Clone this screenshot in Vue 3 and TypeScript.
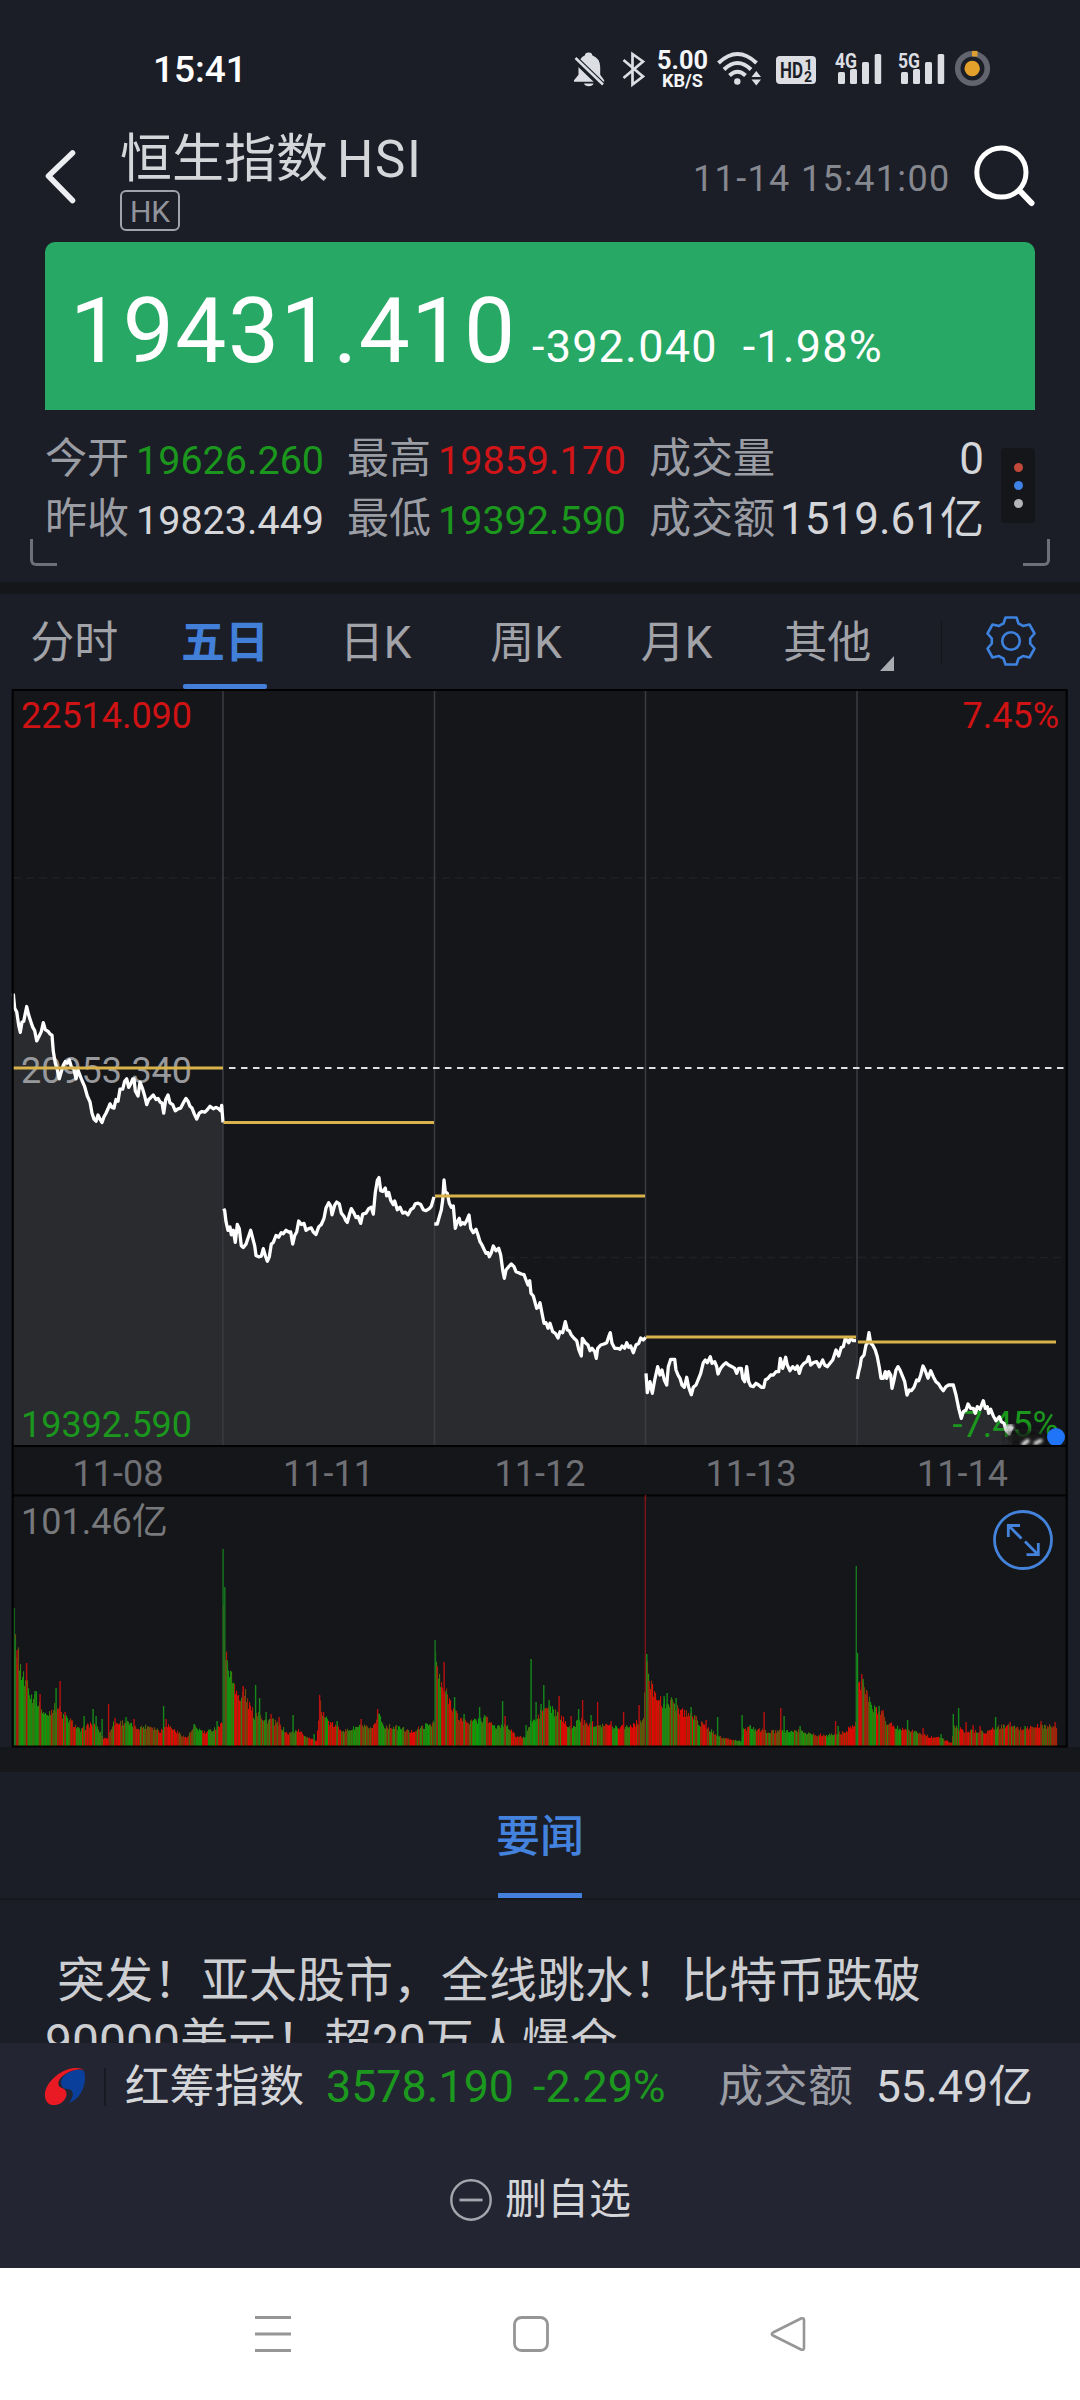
<script setup lang="ts">
interface Session {
  label: string
  x0: number
  y0: number
  sx: number
  sy: number
  left: number
  right: number
  close: number
  raw: string
}

interface Bar {
  x: number
  h: number
  w: number
  color: string
}

const CHART_BOTTOM = 1445
const VOLUME_BOTTOM = 1746

const tabs = ['分时', '五日', '日K', '周K', '月K', '其他']
const activeTab = '五日'

const sessions: Session[] = [
  {
    label: '11-08', x0: 0, y0: 960, sx: 1 / 3, sy: 1 / 2.904, left: 13, right: 223, close: 1068,
    raw: '40,98 44,140 50,150 56,190 61,210 66,180 71,178 80,135 86,160 92,178 98,195 104,205 110,235 118,220 124,208 130,182 136,202 144,207 150,215 156,218 160,265 166,300 172,318 178,345 184,325 190,305 196,295 202,300 208,290 214,310 222,318 228,345 234,320 240,335 246,350 254,368 262,395 270,412 276,445 282,462 288,468 294,450 300,462 306,472 312,455 318,445 324,432 330,418 336,428 342,430 348,405 354,410 360,375 368,375 374,352 380,345 386,370 392,360 398,345 402,345 406,380 414,395 420,355 428,375 434,395 440,420 446,405 452,400 460,392 468,405 474,402 480,412 486,415 491,445 497,405 504,392 510,415 518,420 526,438 534,432 542,430 550,415 558,402 564,410 570,425 576,430 582,445 590,462 598,445 606,440 614,442 622,435 630,425 640,432 648,428 656,432 662,438 665,422 669,472',
  },
  {
    label: '11-11', x0: 0, y0: 960, sx: 1 / 3, sy: 1 / 2.904, left: 223.5, right: 434, close: 1122.5,
    raw: '671,722 674,728 678,760 684,785 690,775 694,798 700,785 706,820 712,768 718,780 724,830 730,835 738,825 744,808 752,785 758,808 764,830 768,858 776,862 784,860 790,838 796,858 802,875 808,862 814,825 820,820 828,800 836,805 844,792 850,795 858,785 866,790 872,790 878,825 884,800 890,790 896,758 904,768 912,765 918,785 926,780 934,778 940,790 948,797 956,775 964,768 972,750 978,720 986,705 992,715 996,740 1004,712 1010,703 1018,708 1024,735 1032,745 1038,758 1042,762 1048,740 1054,722 1062,735 1068,748 1074,745 1082,765 1088,738 1098,735 1106,722 1114,718 1120,738 1126,675 1132,640 1137,632 1142,670 1148,672 1156,662 1160,685 1166,675 1172,698 1180,710 1184,700 1192,725 1200,718 1208,735 1216,732 1224,740 1232,725 1240,720 1246,708 1254,706 1262,710 1270,725 1278,728 1288,722 1294,715 1302,688',
  },
  {
    label: '11-12', x0: 420, y0: 1100, sx: 1 / 3, sy: 1 / 3, left: 435, right: 645, close: 1196,
    raw: '43,372 52,372 58,350 64,330 68,300 72,240 76,275 82,280 88,310 94,322 100,318 106,385 112,365 118,355 122,375 128,368 134,372 140,362 147,345 152,385 160,398 168,388 174,405 180,425 186,435 192,448 198,460 204,458 208,470 214,458 220,438 228,452 236,445 242,465 248,510 253,535 258,510 266,500 274,492 282,500 288,515 296,518 304,522 312,524 318,540 324,555 329,542 333,580 340,588 346,610 350,625 356,620 360,608 366,640 372,670 378,668 384,685 390,670 398,695 406,700 414,714 420,695 428,698 436,665 442,690 448,692 454,705 462,715 470,722 476,748 484,768 487,715 496,728 504,735 510,752 516,745 524,755 529,775 533,745 542,735 552,732 560,728 566,710 571,698 576,730 584,745 592,745 600,748 606,738 614,745 620,728 626,742 632,738 640,758 648,735 656,730 662,714 670,720 677,712',
  },
  {
    label: '11-13', x0: 420, y0: 1100, sx: 1 / 3, sy: 1 / 3, left: 646, right: 856, close: 1337,
    raw: '678,820 682,878 690,845 697,880 704,840 713,800 720,825 726,810 733,840 740,855 745,800 752,778 764,778 768,810 774,825 780,835 786,855 793,862 800,832 806,862 814,884 820,862 828,855 836,835 842,820 850,788 856,780 862,788 871,770 876,790 884,785 890,800 894,822 902,805 910,795 918,788 926,795 936,800 944,805 950,820 956,805 964,805 968,835 974,845 980,800 986,845 992,858 1000,860 1008,850 1016,855 1024,862 1031,862 1036,840 1044,835 1052,825 1060,825 1068,815 1076,815 1081,775 1088,805 1097,772 1102,795 1110,812 1118,800 1126,808 1132,798 1138,820 1144,800 1152,790 1160,785 1166,770 1172,795 1180,788 1190,785 1198,800 1208,780 1214,795 1222,800 1230,790 1238,780 1248,750 1256,768 1264,742 1270,740 1276,715 1286,728 1292,715 1300,722 1308,722',
  },
  {
    label: '11-14', x0: 800, y0: 1280, sx: 1 / 3, sy: 1 / 3, left: 858, right: 1056, close: 1342,
    raw: '172,297 176,275 180,260 184,235 192,225 198,195 202,190 207,158 212,190 218,195 226,210 232,230 238,262 243,295 250,295 256,275 260,295 266,275 272,285 276,325 282,300 288,270 294,260 300,270 308,290 314,305 321,345 328,330 334,332 342,322 350,300 356,302 362,285 369,258 375,270 384,295 392,272 400,290 408,305 416,312 424,325 430,332 438,320 446,315 460,315 468,345 476,385 484,415 490,395 498,390 504,372 512,385 520,385 526,400 532,380 540,388 550,362 556,385 562,380 566,400 572,388 580,408 588,422 598,410 604,425 612,430 618,450 628,462 636,440',
  },
]

const curves = sessions.map((s) => {
  const pts = s.raw.split(' ').map((p) => {
    const [x, y] = p.split(',').map(Number)
    return [s.x0 + x * s.sx, s.y0 + y * s.sy]
  })
  const line = pts.map((p) => `${p[0].toFixed(1)},${p[1].toFixed(1)}`).join(' ')
  const first = pts[0][0].toFixed(1)
  const last = pts[pts.length - 1][0].toFixed(1)
  return { line, area: `${first},${CHART_BOTTOM} ${line} ${last},${CHART_BOTTOM}` }
})

const dateCenters = [118, 328.5, 540, 751, 962.5]

/* Volume envelope: x:height pairs per session. */
const envelope = (
  '14:107 17:93 20:77 24:65 28:66 30:50 36:48 40:37 46:30 52:38 58:38 62:30 70:25 80:15 90:22 97:18 103:8 107:8 112:22 125:24 135:18 150:20 160:15 166:22 175:15 186:8 194:19 205:13 215:18 222:22 ' +
  '223:158 225:86 228:84 230:70 235:60 240:42 243:58 247:44 254:30 259:36 263:25 270:26 280:20 287:12 297:16 305:10 316:5 320:40 324:30 330:22 345:15 361:20 372:16 378:34 383:20 400:18 410:14 420:18 434:24 ' +
  '435:90 437:76 440:60 447:50 453:38 458:28 470:24 480:26 486:27 496:18 506:22 515:10 524:8 531:25 536:25 541:35 548:38 556:32 565:24 572:16 578:28 585:22 600:22 612:19 630:20 643:26 ' +
  '646:90 649:60 655:55 662:40 667:46 672:42 682:34 690:32 698:24 706:18 722:8 732:6 741:5 743:16 750:18 768:14 788:15 800:15 815:11 830:11 845:14 855:24 ' +
  '856:93 859:60 862:66 866:52 872:36 880:36 886:24 897:18 907:17 915:14 930:9 940:8 951:3 953:20 963:15 975:15 985:14 996:18 1006:20 1020:17 1040:20 1056:19'
)
  .split(' ')
  .map((p) => p.split(':').map(Number))

const spikes =
  '14:138:g 15:107:g 17:96:r 26.5:83:r 35:55:g 40:52:r 56:58:g 60:65:r 65:34:r 84:30:g 93:37:g 96:30:g 102:27:g 108.5:42:r 115:28:r 126:29:g 134:27:r 163.5:40:g 166:27:r 194:22:g 217:25:g 223:197:g 224.7:159:g 227:86:g 243:60:r 255.5:61:g 259.5:48:g 266:34:g 271:32:r 279:29:r 293:31:g 314:12:g 319.5:51:r 323.5:34:r 337:25:g 361:27:r 377.5:37:r 435:106:g 437:80:r 444:84:r 446:55:g 454.5:49:g 464:32:g 479.5:39:g 484.5:31:g 502.5:45:g 505:30:r 526:21:g 531:87:g 536:44:g 541:42:g 543.7:61:g 549:46:g 559:50:r 571:30:r 578.5:37:g 582.5:46:r 591:31:g 597.5:44:r 611:25:r 623.5:34:r 639:41:r 645.2:250:r 646.7:92:g 649:65:r 664:50:g 667:53:g 676:48:g 691:39:g 696:30:r 706:26:r 717.5:29:g 742:31:g 750:21:g 764:34:r 780.7:38:r 784:30:g 800:20:g 835.5:25:r 838:20:g 856.2:180:g 857.4:93:g 861.7:72:r 863:67:g 867:55:r 879:40:g 883:36:r 907.5:26:g 923:18:r 941:12:g 953.2:32:g 958.5:38:g 966:24:r 973:21:r 980:20:r 995.5:29:g 1004:21:g 1010:24:r 1025:20:g 1041:25:r 1055:24:r'
    .split(' ')
    .map((p) => p.split(':'))

const noise = (n: number): number => {
  const v = Math.sin(n * 127.1 + 311.7) * 43758.5453
  return v - Math.floor(v)
}

const envelopeAt = (x: number): number => {
  for (let i = 1; i < envelope.length; i++) {
    const [xa, ha] = envelope[i - 1]
    const [xb, hb] = envelope[i]
    if (x <= xb) return ha + ((hb - ha) * (x - xa)) / (xb - xa)
  }
  return envelope[envelope.length - 1][1]
}

const bars: Bar[] = []
const palette = {
  up: ['#e00a06', '#d40c05', '#b81a08', '#8c300a'],
  mixed: ['#66500b', '#3f660c', '#8c300b', '#2f8210', '#a8200a'],
  down: ['#0a9e0b', '#10920f', '#2a8210', '#3f740d'],
}
for (let x = 14; x <= 1056; x += 1) {
  const cluster = noise(Math.floor(x / 6.3) + 3)
  const set = cluster < 0.36 ? palette.up : cluster > 0.74 ? palette.down : palette.mixed
  const h = envelopeAt(x) * (0.86 + noise(x) * 0.28)
  bars.push({ x, h, w: 1.1, color: set[Math.floor(noise(x * 1.7 + 9) * set.length)] })
}
for (const [x, h, c] of spikes) {
  const tall = Number(h) > 100
  const color = c === 'g' ? (tall ? '#157820' : '#14881a') : tall ? '#7c1418' : '#b81010'
  bars.push({ x: Number(x) - 0.6, h: Number(h), w: 1.4, color })
}
</script>

<template>
  <div class="screen">
    <header class="head">
      <div class="status">
        <span class="clock">15:41</span>
        <svg class="status-icons" width="420" height="40" viewBox="572 48 420 40">
          <g fill="#dcdee3">
            <path d="M585 55.2q0-2.8 3.6-2.8t3.6 2.8q8 3 8 12v7.500l4 5.500v1.500H574v-1.500l4.500-5.500V67q0-9 6.500-11.800zM584 83.500h9.500q-.8 2.800-4.700 2.800t-4.800-2.800z" />
            <path d="M573.500 57.500 603.500 86.500" stroke="#1b1e27" stroke-width="7" />
            <path d="M575.500 58 603 84.500" stroke="#dcdee3" stroke-width="2.600" />
          </g>
          <path d="M623.500 60 643 76.500 632.500 84.500V54L643 61.500 623.500 78" fill="none" stroke="#dcdee3" stroke-width="2.700" />
          <text x="682.500" y="69.300" text-anchor="middle" class="st-speed" textLength="51" lengthAdjust="spacingAndGlyphs">5.00</text>
          <text x="682.500" y="86.500" text-anchor="middle" class="st-unit" textLength="41" lengthAdjust="spacingAndGlyphs">KB/S</text>
          <g fill="none" stroke="#dcdee3" stroke-width="4">
            <path d="M718.500 63q19-18 38 0" />
            <path d="M724 69.500q13.500-13 27 0" />
            <path d="M729.500 75.500q8-7.500 16 0" />
          </g>
          <circle cx="737.300" cy="81.500" r="3.200" fill="#dcdee3" />
          <path d="M751.500 77 756.300 71 761 77zM751.500 79.500 756.300 85.500 761 79.500z" fill="#dcdee3" />
          <rect x="776" y="56" width="40" height="28" rx="4" fill="#dcdee3" />
          <text x="780" y="78" class="st-hd" textLength="23" lengthAdjust="spacingAndGlyphs">HD</text>
          <text x="804.500" y="69.500" class="st-sub">1</text>
          <text x="804" y="81.500" class="st-sub">2</text>
          <g v-for="(net, i) in ['4G', '5G']" :key="net" :transform="`translate(${i * 63} 0)`">
            <g fill="#dcdee3">
              <rect x="838" y="72" width="7" height="12" rx="1.500" />
              <rect x="850" y="69" width="7" height="15" rx="1.500" />
              <rect x="862" y="62" width="7" height="22" rx="1.500" />
              <rect x="874.700" y="54" width="6.500" height="30" rx="1.500" />
            </g>
            <text x="835" y="67.500" class="st-net" textLength="22" lengthAdjust="spacingAndGlyphs">{{ net }}</text>
          </g>
          <circle cx="972.500" cy="68.500" r="14.800" fill="none" stroke="#62656f" stroke-width="5.600" />
          <path d="M972 53.700h5.500" stroke="#dba02f" stroke-width="5.600" />
          <circle cx="972.200" cy="68.500" r="7.700" fill="#e3a02a" />
        </svg>
      </div>

      <div class="title-row">
        <svg class="back" width="36" height="60" viewBox="44 146 36 60">
          <path d="M72.500 153 48.500 176 72.500 200.500" fill="none" stroke="#eceef2" stroke-width="5.600" stroke-linecap="round" stroke-linejoin="round" />
        </svg>
        <div class="names">
          <h1 class="name">恒生指数<span class="code">HSI</span></h1>
          <span class="market">HK</span>
        </div>
        <time class="stamp">11-14 15:41:00</time>
        <svg class="search" width="64" height="64" viewBox="972 144 64 64">
          <circle cx="1001.400" cy="172.500" r="24.600" fill="none" stroke="#fff" stroke-width="5" />
          <path d="M1019.500 190.500 1031.500 203" stroke="#fff" stroke-width="6" stroke-linecap="round" />
        </svg>
      </div>

      <div class="quote">
        <span class="price">19431.410</span>
        <span class="delta">-392.040</span>
        <span class="delta pct">-1.98%</span>
      </div>

      <div class="stats">
        <div class="col c1">
          <div class="stat"><span>今开</span><b class="down">19626.260</b></div>
          <div class="stat"><span>昨收</span><b>19823.449</b></div>
        </div>
        <div class="col c2">
          <div class="stat"><span>最高</span><b class="up">19859.170</b></div>
          <div class="stat"><span>最低</span><b class="down">19392.590</b></div>
        </div>
        <div class="col c3">
          <div class="stat"><span>成交量</span><b>0</b></div>
          <div class="stat"><span>成交额</span><b>1519.61亿</b></div>
        </div>
        <div class="more"><i class="dot red"></i><i class="dot blue"></i><i class="dot grey"></i></div>
      </div>
      <div class="corners"><i class="corner l"></i><i class="corner r"></i></div>
    </header>

    <nav class="tabs">
      <div v-for="t in tabs" :key="t" class="tab" :class="{ active: t === activeTab, more: t === '其他' }">
        <span>{{ t }}</span>
      </div>
      <i class="divider"></i>
      <svg class="gear" width="54" height="54" viewBox="-27 -27 54 54">
        <path
          d="M-5.500-23.500H5.500L7.500-17.500Q10-16.500 12-15L18.500-16.500 23.500-7.500 19.200-2.500V2.500L23.500 7.500 18.500 16.500 12 15Q10 16.500 7.500 17.500L5.500 23.500H-5.500L-7.500 17.500Q-10 16.500-12 15L-18.500 16.500-23.500 7.500-19.200 2.500V-2.500L-23.500-7.500-18.500-16.500-12-15Q-10-16.500-7.500-17.500Z"
          fill="none" stroke="#3d82de" stroke-width="2.600" stroke-linejoin="round" />
        <circle r="8.800" fill="none" stroke="#3d82de" stroke-width="2.600" />
      </svg>
    </nav>

    <svg class="chart" width="1080" height="1083" viewBox="0 689 1080 1083">
      <defs>
        <filter id="soft" x="-50%" y="-50%" width="200%" height="200%"><feGaussianBlur stdDeviation="4" /></filter>
        <filter id="softer" x="-50%" y="-50%" width="200%" height="200%"><feGaussianBlur stdDeviation="1.500" /></filter>
        <clipPath id="plot"><rect x="10" y="690" width="1056" height="755" /></clipPath>
      </defs>
      <rect x="0" y="1747" width="1080" height="25" fill="#15171a" />
      <rect x="12.500" y="690" width="1055" height="1056.500" fill="#151619" />

      <g stroke="#202125" stroke-width="1.500" stroke-dasharray="8 5">
        <path d="M13 878H1066M13 1257.500H1066" />
      </g>

      <g clip-path="url(#plot)">
        <polygon v-for="(c, i) in curves" :key="i" :points="c.area" fill="#2a2b2f" />
      </g>
      <path d="M223 690V1445M434.500 690V1445M645.500 690V1445M857 690V1445" stroke="#3b3c42" stroke-width="1.500" />
      <path d="M229 1068H1066" stroke="#dfdfe2" stroke-width="2" stroke-dasharray="6.500 5.500" />

      <text x="21" y="1083" class="lbl mid" textLength="171">20953.340</text>
      <text x="21" y="1437" class="lbl green" textLength="171">19392.590</text>
      <text x="1059" y="1437" class="lbl green" text-anchor="end">-7.45%</text>

      <g clip-path="url(#plot)">
        <polyline v-for="(c, i) in curves" :key="i" :points="c.line" fill="none" stroke="#fff" stroke-width="3.300" stroke-linejoin="round" />
        <path d="M1007 1428 1016 1432 1036 1431 1047 1437 1040 1444H1008z" fill="#151619" filter="url(#soft)" />
        <path d="M1006 1429 1013 1426" stroke="#d8d8d8" stroke-width="6" filter="url(#softer)" />
        <path d="M1022 1445 1029 1440M1034 1444 1042 1440" stroke="#f2f2f2" stroke-width="3.500" filter="url(#softer)" />
        <circle cx="1056" cy="1437" r="9" fill="#1f74f8" />
      </g>
      <path v-for="s in sessions" :key="s.label" :d="`M${s.left} ${s.close}H${s.right}`" stroke="#d8b24a" stroke-width="3" />

      <text x="21" y="727.500" class="lbl red" textLength="171">22514.090</text>
      <text x="1059" y="727.500" class="lbl red" text-anchor="end">7.45%</text>
      <text v-for="(s, i) in sessions" :key="s.label" :x="dateCenters[i]" y="1485.500" class="lbl date" text-anchor="middle">{{ s.label }}</text>
      <text x="21" y="1534" class="lbl vol">101.46亿</text>

      <rect v-for="(b, i) in bars" :key="i" :x="b.x" :y="VOLUME_BOTTOM - b.h" :width="b.w" :height="b.h" :fill="b.color" />

      <g fill="none" stroke="#020203" stroke-width="2">
        <rect x="12.700" y="690" width="1054" height="1056.500" />
        <path d="M12.700 1446H1067M12.700 1495.500H1067" />
      </g>
      <path d="M645.500 1495V1500" stroke="#7c1418" stroke-width="1.500" />

      <g fill="none" stroke="#4483dc" stroke-width="2.800">
        <circle cx="1023" cy="1540" r="28.500" />
        <path d="M1008.300 1537V1525.500H1020M1008.500 1525.500 1021.500 1538.500M1025 1541.500 1038 1554.500M1038.300 1543V1554.700H1026.500" />
      </g>
    </svg>

    <section class="news">
      <div class="news-tab"><span>要闻</span></div>
      <p class="headline">&nbsp;突发！亚太股市，全线跳水！比特币跌破<br />90000美元！超20万人爆仓</p>
    </section>

    <footer class="dock">
      <div class="index">
        <svg class="logo" width="42" height="40" viewBox="0 0 42 40">
          <path d="M40 4C44 14 38 32 25 36 31 29 30 22 23 22 17 22 15 14 20 9 26 3 35 1 40 4z" fill="#0b3f9c" />
          <path d="M40 3C34-1 22 1 12 9 2 17-2 28 3 35 8 41 19 38 22 30 24 25 21 22 18 21 12 19 14 12 20 8 27 3 35 1 40 3z" fill="#ea1a24" />
        </svg>
        <i class="bar"></i>
        <span class="index-name">红筹指数</span>
        <span class="index-val">3578.190</span>
        <span class="index-pct">-2.29%</span>
        <span class="index-lbl">成交额</span>
        <span class="index-amt">55.49亿</span>
      </div>
      <div class="remove">
        <svg width="44" height="44" viewBox="0 0 44 44">
          <circle cx="22" cy="22" r="19.700" fill="none" stroke="#a4a6ae" stroke-width="2.400" />
          <path d="M10.500 22H33.500" stroke="#a4a6ae" stroke-width="2.800" />
        </svg>
        <span>删自选</span>
      </div>
    </footer>

    <div class="sysnav">
      <svg width="36" height="38" viewBox="0 0 36 38"><path d="M0 2.500H36M0 19H36M0 35.500H36" stroke="#969696" stroke-width="3" /></svg>
      <svg width="36" height="38" viewBox="0 0 36 38"><rect x="1.500" y="2.500" width="33" height="33" rx="7" fill="none" stroke="#969696" stroke-width="2.800" /></svg>
      <svg width="36" height="38" viewBox="0 0 36 38"><path d="M31 3.500 3 17.500Q.5 19 3 20.500L31 34.500Q34 35.500 34 33V5Q34 2.500 31 3.500z" fill="none" stroke="#969696" stroke-width="2.600" stroke-linejoin="round" /></svg>
    </div>
  </div>
</template>

<style>
body {
  background: #1b1e27;
}
</style>

<style scoped>
.screen {
  width: 1080px;
  height: 2400px;
  display: flex;
  flex-direction: column;
  overflow: hidden;
  background: #1b1e27;
  color: #d5d6da;
  font-family: Roboto, 'Noto Sans CJK SC', sans-serif;
}
.head {
  height: 582px;
  flex: none;
  border-bottom: 12px solid #15161a;
  display: flex;
  flex-direction: column;
}
.status {
  height: 48px;
  padding: 48px 88px 0 153px;
  display: flex;
  justify-content: space-between;
}
.clock {
  font-size: 37px;
  line-height: 43px;
  font-weight: 500;
  color: #fff;
}
.status-icons {
  flex: none;
  overflow: visible;
}
.st-speed { font: 700 25px Roboto, sans-serif; fill: #f4f5f7; }
.st-unit { font: 700 19px Roboto, sans-serif; fill: #f4f5f7; }
.st-hd { font: 700 22px Roboto, sans-serif; fill: #1b1e27; }
.st-sub { font: 700 14px Roboto, sans-serif; fill: #1b1e27; }
.st-net { font: 700 21px Roboto, sans-serif; fill: #dcdee3; stroke: #1b1e27; stroke-width: 2.500px; paint-order: stroke; }
.title-row {
  height: 146px;
  padding: 0 44px;
  display: flex;
}
.back {
  margin-top: 50px;
  flex: none;
}
.names {
  width: 360px;
  margin-left: 40px;
  padding-top: 34px;
  display: flex;
  flex-direction: column;
  align-items: flex-start;
}
.name {
  margin: 0;
  height: 60px;
  font-size: 52px;
  line-height: 60px;
  font-weight: 400;
  white-space: nowrap;
}
.code {
  margin-left: 9px;
  font-size: 51px;
  letter-spacing: 1.600px;
}
.market {
  width: 60px;
  height: 41px;
  box-sizing: border-box;
  border: 2px solid #a0a3ac;
  border-radius: 6px;
  font-size: 30px;
  line-height: 39px;
  text-align: center;
  color: #92949c;
}
.stamp {
  margin-left: 213px;
  width: 279px;
  padding-top: 60px;
  font-size: 36px;
  line-height: 46px;
  letter-spacing: 1.350px;
  white-space: nowrap;
  color: #868890;
}
.search {
  flex: none;
  margin-top: 48px;
}
.quote {
  margin: 0 45px;
  height: 168px;
  border-radius: 10px 10px 0 0;
  background: #27a864;
  color: #fff;
  display: flex;
  align-items: baseline;
  white-space: nowrap;
}
.price {
  margin-left: 25px;
  width: 462px;
  font-size: 91px;
  line-height: 178px;
  letter-spacing: 1.500px;
}
.delta {
  font-size: 45px;
  letter-spacing: 1.200px;
}
.pct {
  margin-left: 25px;
}
.stats {
  height: 129px;
  padding: 30px 45px 0;
  box-sizing: border-box;
  display: flex;
}
.col {
  display: flex;
  flex-direction: column;
}
.c1 { width: 302px; }
.c2 { width: 302px; }
.c3 { width: 335px; }
.stat {
  height: 60px;
  flex: none;
  line-height: 40px;
  display: flex;
  white-space: nowrap;
  color: #9b9da4;
  font-size: 42px;
}
.stat span {
  line-height: 38px;
}
.stat b {
  font-weight: 400;
  font-size: 39.500px;
  line-height: 41px;
  margin-left: 7px;
  color: #d5d6da;
}
.c3 .stat {
  justify-content: space-between;
}
.c3 .stat b {
  font-size: 44px;
  line-height: 38px;
  margin-left: 0;
}
.stat b.up { color: #d01518; }
.stat b.down { color: #1b971d; }
.stats .more {
  margin: 8px 0 0 17px;
  width: 34px;
  height: 75px;
  flex: none;
  border-radius: 4px;
  background: #151619;
  display: flex;
  flex-direction: column;
  align-items: center;
  justify-content: center;
  gap: 9px;
}
.dot {
  width: 9px;
  height: 9px;
  border-radius: 50%;
}
.red { background: #c2483a; }
.blue { background: #3f83e6; }
.grey { background: #b4b5b9; }
.corners {
  padding: 0 30px;
  height: 27px;
  display: flex;
  justify-content: space-between;
}
.corner {
  width: 24px;
  height: 24px;
  border-bottom: 3px solid #6e7079;
}
.corner.l {
  border-left: 3px solid #6e7079;
  border-bottom-left-radius: 6px;
}
.corner.r {
  border-right: 3px solid #6e7079;
  border-bottom-right-radius: 6px;
}
.tabs {
  height: 95px;
  flex: none;
  display: flex;
  align-items: stretch;
}
.tab {
  width: 150.600px;
  display: flex;
  justify-content: center;
  font-size: 44px;
  line-height: 98px;
  color: #a2a3a8;
  position: relative;
}
.tab span {
  margin-right: 2px;
}
.tab.active {
  color: #417fd9;
  font-weight: 600;
}
.tab.active::after {
  content: '';
  position: absolute;
  bottom: 0;
  left: 32px;
  width: 84px;
  height: 5px;
  border-radius: 2px;
  background: #447edb;
}
.tab.more::after {
  content: '';
  position: absolute;
  right: 10px;
  bottom: 18px;
  border-left: 14px solid transparent;
  border-bottom: 15px solid #a9abb0;
}
.divider {
  width: 1px;
  height: 44px;
  margin: 26px 0 0 37px;
  background: #13151b;
}
.gear {
  margin: 20px 0 0 42px;
}
.chart {
  display: block;
  flex: none;
}
.lbl {
  font: 36px Roboto, 'Noto Sans CJK SC', sans-serif;
}
.lbl.red { fill: #cf1214; background: none; }
.lbl.green { fill: #1b971d; }
.lbl.mid { fill: #98999d; }
.lbl.date { fill: #6f7075; }
.lbl.vol { fill: #77797d; }
.news {
  height: 271px;
  flex: none;
  overflow: hidden;
}
.news-tab {
  height: 126px;
  border-bottom: 2px solid #16181f;
  display: flex;
  justify-content: center;
}
.news-tab span {
  height: 121px;
  border-bottom: 5px solid #447fdb;
  width: 84px;
  display: flex;
  justify-content: center;
  white-space: nowrap;
  font-size: 44px;
  line-height: 130px;
  font-weight: 500;
  color: #4382dd;
}
.headline {
  margin: 50px 0 0 45px;
  font-size: 48px;
  line-height: 61px;
  white-space: nowrap;
  color: #cdced2;
}
.dock {
  height: 225px;
  flex: none;
  background: #232632;
}
.index {
  height: 88px;
  padding: 0 47px 0 44px;
  display: flex;
  align-items: center;
  font-size: 44.800px;
  line-height: 86px;
  white-space: nowrap;
}
.bar {
  width: 2px;
  height: 38px;
  margin: 0 19px 0 18px;
  background: #171a22;
}
.index-name { width: 202px; }
.index-val { width: 208px; color: #1c981e; }
.index-pct { width: 186px; color: #1c981e; }
.index-lbl { width: 158px; color: #9b9da5; }
.remove {
  height: 137px;
  display: flex;
  justify-content: center;
  align-items: center;
}
.remove svg {
  margin-right: 12px;
}
.remove span {
  font-size: 42px;
  line-height: 138px;
}
.sysnav {
  height: 132px;
  flex: none;
  background: #fff;
  padding: 0 274px 0 255px;
  display: flex;
  justify-content: space-between;
  align-items: center;
}
</style>
